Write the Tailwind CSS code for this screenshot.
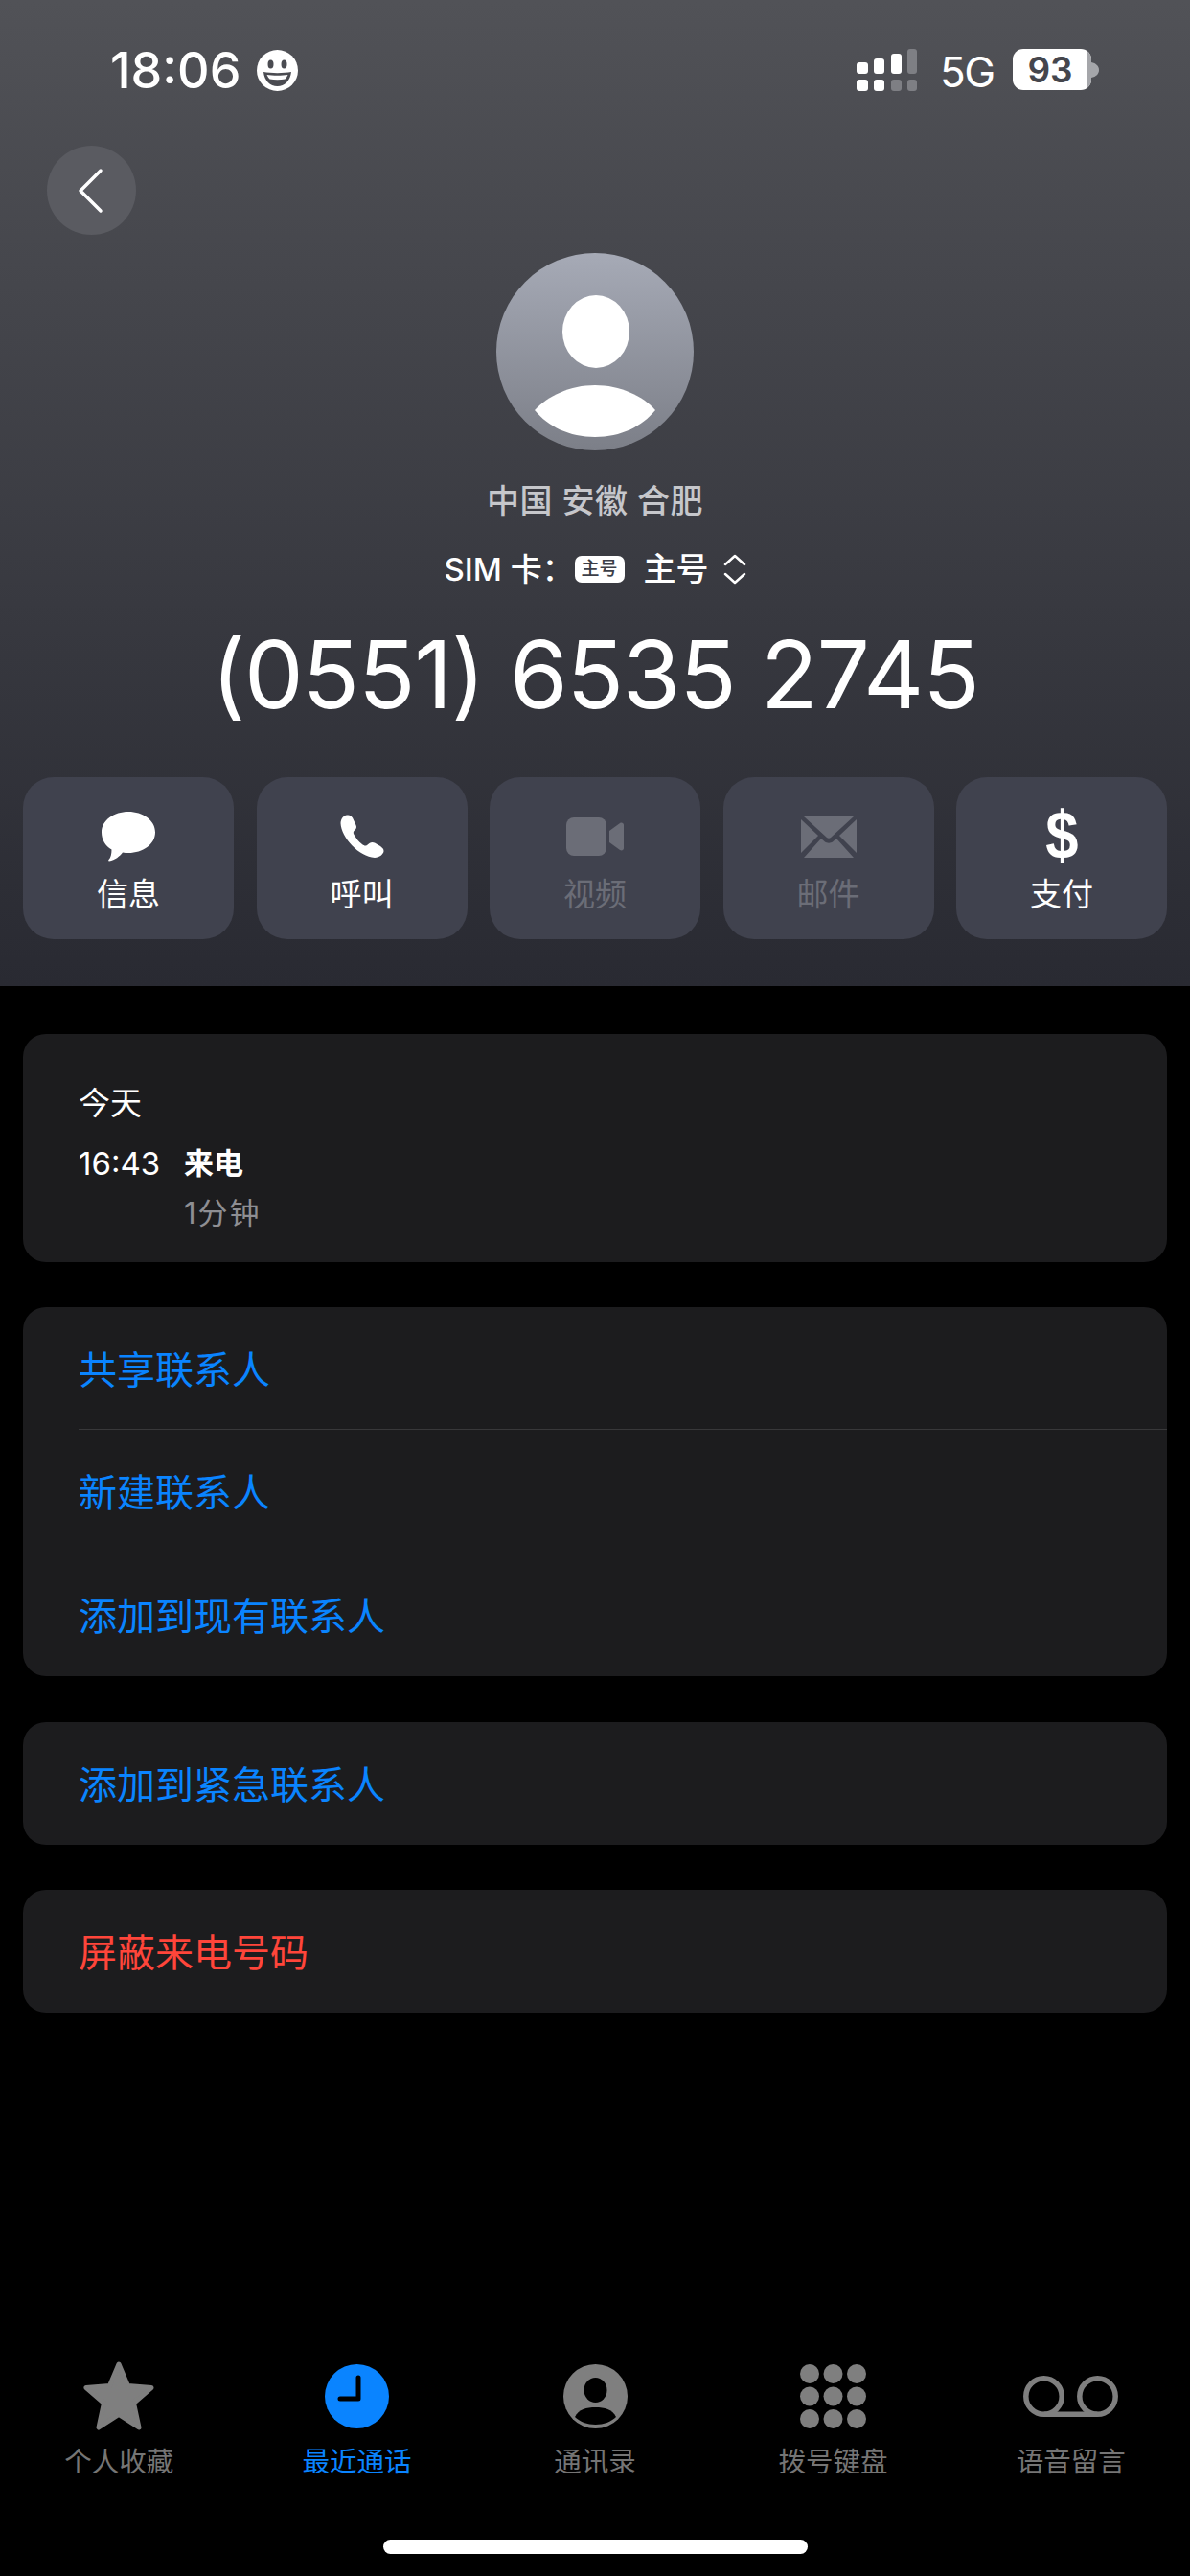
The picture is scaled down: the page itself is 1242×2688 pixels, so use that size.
<!DOCTYPE html>
<html lang="zh-CN">
<head>
    <meta charset="UTF-8">
    <meta name="viewport" content="width=device-width, initial-scale=1.0">
    <title>Call detail</title>
    <script src="https://cdn.jsdelivr.net/npm/@tailwindcss/browser@4"></script>
</head>
<body class="bg-black text-white font-['Inter','Noto_Sans_CJK_SC',sans-serif]">
<div class="w-[1242px] h-[2688px] flex flex-col overflow-hidden">

    <!-- Header -->
    <header class="h-[1029px] shrink-0 bg-linear-to-b from-[#515257] to-[#292a32]">
        <!-- Status bar -->
        <div class="h-[152px] pt-[51px] pl-[115px] pr-[95px] flex justify-between items-start">
            <div class="flex items-center h-[45px] gap-[17px]">
                <span class="text-[52px] leading-[45px] font-medium">18:06</span>
                <svg class="w-[43px] h-[43px]" viewBox="0 0 43 43">
                    <circle cx="21.500" cy="21.500" r="21.500" fill="#fff"/>
                    <ellipse cx="14.500" cy="15" rx="3" ry="4.500" fill="#4a4b51"/>
                    <ellipse cx="28.500" cy="15" rx="3" ry="4.500" fill="#4a4b51"/>
                    <path d="M7 23c8 1.500 21 1.500 29 0-1 9-7 15-14.500 15S8 32 7 23z" fill="#4a4b51"/>
                    <path d="M10.500 26c6 1 16 1 22 0-1 2-2 3.500-3 4.500-5 1-11 1-16 0-1-1-2-2.500-3-4.500z" fill="#fff"/>
                </svg>
            </div>
            <div class="flex items-start h-[45px]">
                <svg class="w-[64px] h-[45px] mr-[23px]" viewBox="0 0 64 45">
                    <rect x="0" y="14" width="12" height="12" rx="3" fill="#fff"/>
                    <rect x="18" y="10" width="11" height="16" rx="3" fill="#fff"/>
                    <rect x="36" y="5" width="11" height="21" rx="3" fill="#fff"/>
                    <rect x="53" y="0" width="10" height="26" rx="3" fill="#7e7f84"/>
                    <rect x="0" y="32" width="12" height="12" rx="3" fill="#fff"/>
                    <rect x="18" y="32" width="11" height="12" rx="3" fill="#fff"/>
                    <rect x="36" y="32" width="11" height="12" rx="3" fill="#7e7f84"/>
                    <rect x="53" y="32" width="10" height="12" rx="3" fill="#7e7f84"/>
                </svg>
                <span class="text-[44px] leading-[45px] mt-[2px] w-[53px] tracking-[-1.500px]">5G</span>
                <div class="ml-[23px] flex items-center">
                    <div class="w-[82px] h-[43px] rounded-[11px] overflow-hidden bg-white flex">
                        <span class="flex-1 text-[37px] leading-[43px] font-semibold text-center text-[#45464d]">93</span>
                        <span class="w-[4px] bg-[#a5a6aa]"></span>
                    </div>
                    <svg class="w-[8px] h-[16px]" viewBox="0 0 8 16"><path d="M0 0c5 1 8 4 8 8s-3 7-8 8z" fill="#a5a6aa"/></svg>
                </div>
            </div>
        </div>

        <!-- Back -->
        <button class="ml-[49px] w-[93px] h-[93px] rounded-full bg-[#5a5b61] flex items-center justify-center">
            <svg class="w-[30px] h-[48px]" viewBox="0 0 30 48" fill="none" stroke="#fff" stroke-width="3.500" stroke-linecap="round" stroke-linejoin="round"><path d="M24 3 3 24l21 21"/></svg>
        </button>

        <!-- Avatar -->
        <div class="mt-[19px] mx-auto w-[206px] h-[206px] rounded-full overflow-hidden bg-linear-to-b from-[#a6aab6] to-[#7c7f88]">
            <svg class="w-[206px] h-[206px]" viewBox="0 0 206 206" fill="#fff">
                <ellipse cx="104" cy="82" rx="35" ry="38"/>
                <path d="M40 164c14-15 37-26 63-26s50 11 63 26c-14 17-36 28-63 28s-49-11-63-28z"/>
            </svg>
        </div>

        <p class="mt-[28px] h-[50px] text-[34px] leading-[50px] font-medium text-center text-[#c6c7cb] tracking-[0.500px]">中国 安徽 合肥</p>

        <div class="mt-[26px] h-[40px] flex justify-center items-center text-[33px] font-medium">
            <span class="leading-[40px] w-[136px]">SIM 卡：</span>
            <span class="w-[52px] h-[28px] rounded-[7px] bg-white text-[#3c3e47] text-[19px] leading-[28px] text-center">主号</span>
            <span class="ml-[20px] text-[34px] leading-[40px]">主号</span>
            <svg class="ml-[15px] w-[24px] h-[32px]" viewBox="0 0 24 32" fill="none" stroke="#fff" stroke-width="2.500" stroke-linecap="round" stroke-linejoin="round"><path d="M2 11 12 2l10 9M2 21l10 9 10-9"/></svg>
        </div>

        <h1 class="mt-[30px] h-[120px] text-[98px] leading-[120px] tracking-[-1.200px] text-center font-normal">(0551) 6535 2745</h1>

        <!-- Actions -->
        <div class="mt-[47px] px-[24px] flex justify-between">
            <div class="w-[220px] h-[169px] rounded-[32px] bg-[#40424e] flex flex-col items-center">
                <div class="h-[102px] pt-[36px]">
                    <svg class="w-[56px] h-[52px]" viewBox="0 0 56 52" fill="#fff"><path d="M28 0c15 0 28 9 28 21.500S43 43 28 43c-2 0-4 0-6-.500-3 4-8 8-14 9-1 0-1-1-.500-1.500 2-2 3-6 3-10.500C4 36 0 29 0 21.500 0 9 13 0 28 0z"/></svg>
                </div>
                <span class="text-[33px] leading-[40px]">信息</span>
            </div>
            <div class="w-[220px] h-[169px] rounded-[32px] bg-[#40424e] flex flex-col items-center">
                <div class="h-[102px] pt-[39px]">
                    <svg class="w-[46px] h-[46px]" viewBox="0 0 46 46" fill="#fff"><path d="M7 .5C4 1 .5 4 .5 9 1 24 20 44 36 45c5 0 9.500-4 9.500-7 0-2-1.500-3.500-3.500-5l-6-3.500c-2-1-4-.500-5.500.500L28 32c-2 1-3 .500-5-1-4-3-6-6-8.500-10-1-2-1-3 .500-4.500 2-1.500 2.500-3.500 1.500-5.500L13 3.500C11.500 1 9.500 0 7 .5z"/></svg>
                </div>
                <span class="text-[33px] leading-[40px]">呼叫</span>
            </div>
            <div class="w-[220px] h-[169px] rounded-[32px] bg-[#40424e] flex flex-col items-center">
                <div class="h-[102px] pt-[42px]">
                    <svg class="w-[60px] h-[40px]" viewBox="0 0 60 40" fill="#6b6d77"><rect x="0" y="0" width="42" height="40" rx="8"/><path d="M45 14l11-8c2-1 4 0 4 2v24c0 2-2 3-4 2l-11-8z"/></svg>
                </div>
                <span class="text-[33px] leading-[40px] text-[#6b6d77]">视频</span>
            </div>
            <div class="w-[220px] h-[169px] rounded-[32px] bg-[#40424e] flex flex-col items-center">
                <div class="h-[102px] pt-[41px]">
                    <svg class="w-[58px] h-[43px]" viewBox="0 0 58 43" fill="#6b6d77">
                        <path d="M3 0h52L31 22c-1 1-3 1-4 0z"/>
                        <path d="M0 3l18 17L0 38z"/><path d="M58 3 40 20l18 18z"/>
                        <path d="M3 43l18-20 4 3.500c2 1.500 6 1.500 8 0l4-3.500 18 20z"/>
                    </svg>
                </div>
                <span class="text-[33px] leading-[40px] text-[#6b6d77]">邮件</span>
            </div>
            <div class="w-[220px] h-[169px] rounded-[32px] bg-[#40424e] flex flex-col items-center">
                <div class="h-[102px] pt-[26px] text-[70px] leading-[70px] font-bold font-['Liberation_Sans',sans-serif] scale-x-[0.88]">$</div>
                <span class="text-[33px] leading-[40px]">支付</span>
            </div>
        </div>
    </header>

    <!-- Detail cards -->
    <main class="px-[24px] pt-[50px] flex flex-col">
        <section class="h-[238px] rounded-[24px] bg-[#1c1c1e] pl-[58px] pt-[52px]">
            <p class="text-[33px] leading-[40px]">今天</p>
            <div class="mt-[23px] flex">
                <span class="w-[110px] text-[33px] leading-[40px]">16:43</span>
                <div>
                    <p class="text-[31px] leading-[40px] font-semibold">来电</p>
                    <p class="mt-[12px] text-[31px] leading-[40px] tracking-[2px] text-[#8e8e93]">1分钟</p>
                </div>
            </div>
        </section>

        <section class="mt-[47px] rounded-[24px] bg-[#1c1c1e] pl-[58px] text-[40px] text-[#0a84ff] divide-y divide-[#38383a]">
            <div class="h-[128px] leading-[131px]">共享联系人</div>
            <div class="h-[129px] leading-[131px]">新建联系人</div>
            <div class="h-[128px] leading-[131px]">添加到现有联系人</div>
        </section>

        <section class="mt-[48px] h-[128px] rounded-[24px] bg-[#1c1c1e] pl-[58px] text-[40px] leading-[131px] text-[#0a84ff]">添加到紧急联系人</section>

        <section class="mt-[47px] h-[128px] rounded-[24px] bg-[#1c1c1e] pl-[58px] text-[40px] leading-[131px] text-[#ff453a]">屏蔽来电号码</section>
    </main>

    <!-- Tab bar -->
    <nav class="mt-auto flex text-[28.500px] leading-[40px] text-[#757575]">
        <div class="flex-1 flex flex-col items-center">
            <div class="h-[80px] flex items-center">
                <svg class="w-[74px] h-[72px]" viewBox="0 0 74 72" fill="#7f7f7f" stroke="#7f7f7f" stroke-width="5" stroke-linejoin="round"><path d="M37 3l9.500 22.500L71 27.500 52.500 43.500 58 69 37 55.500 16 69l5.500-25.500L3 27.500l24.500-2z"/></svg>
            </div>
            <span class="mt-[9px]">个人收藏</span>
        </div>
        <div class="flex-1 flex flex-col items-center text-[#0a84ff]">
            <div class="h-[80px] flex items-center">
                <svg class="w-[67px] h-[67px]" viewBox="0 0 67 67"><circle cx="33.500" cy="33.500" r="33.500" fill="#0a84ff"/><path d="M35 14v22H16" fill="none" stroke="#000" stroke-width="5" stroke-linecap="round" stroke-linejoin="round"/></svg>
            </div>
            <span class="mt-[9px]">最近通话</span>
        </div>
        <div class="flex-1 flex flex-col items-center">
            <div class="h-[80px] flex items-center">
                <svg class="w-[67px] h-[67px]" viewBox="0 0 67 67">
                    <circle cx="33.500" cy="33.500" r="33.500" fill="#7f7f7f"/>
                    <ellipse cx="33.500" cy="27" rx="12" ry="13" fill="#000"/>
                    <path d="M12 55c4-8 12-10 21.500-10S51 47 55 55c-5 5-13 8-21.500 8S17 60 12 55z" fill="#000"/>
                </svg>
            </div>
            <span class="mt-[9px]">通讯录</span>
        </div>
        <div class="flex-1 flex flex-col items-center">
            <div class="h-[80px] flex items-center">
                <svg class="w-[69px] h-[67px]" viewBox="0 0 69 67" fill="#7f7f7f">
                    <circle cx="10" cy="10" r="10"/><circle cx="34.500" cy="10" r="10"/><circle cx="59" cy="10" r="10"/>
                    <circle cx="10" cy="33.500" r="10"/><circle cx="34.500" cy="33.500" r="10"/><circle cx="59" cy="33.500" r="10"/>
                    <circle cx="10" cy="57" r="10"/><circle cx="34.500" cy="57" r="10"/><circle cx="59" cy="57" r="10"/>
                </svg>
            </div>
            <span class="mt-[9px]">拨号键盘</span>
        </div>
        <div class="flex-1 flex flex-col items-center">
            <div class="h-[80px] flex items-center">
                <svg class="w-[99px] h-[43px]" viewBox="0 0 99 43" fill="none" stroke="#7f7f7f" stroke-width="5.500"><circle cx="21.500" cy="21.500" r="18.700"/><circle cx="77.500" cy="21.500" r="18.700"/><path d="M21.500 40.200h56"/></svg>
            </div>
            <span class="mt-[9px]">语音留言</span>
        </div>
    </nav>

    <div class="mt-[61px] mb-[23px] mx-auto w-[443px] h-[15px] rounded-full bg-white"></div>
</div>
</body>
</html>
